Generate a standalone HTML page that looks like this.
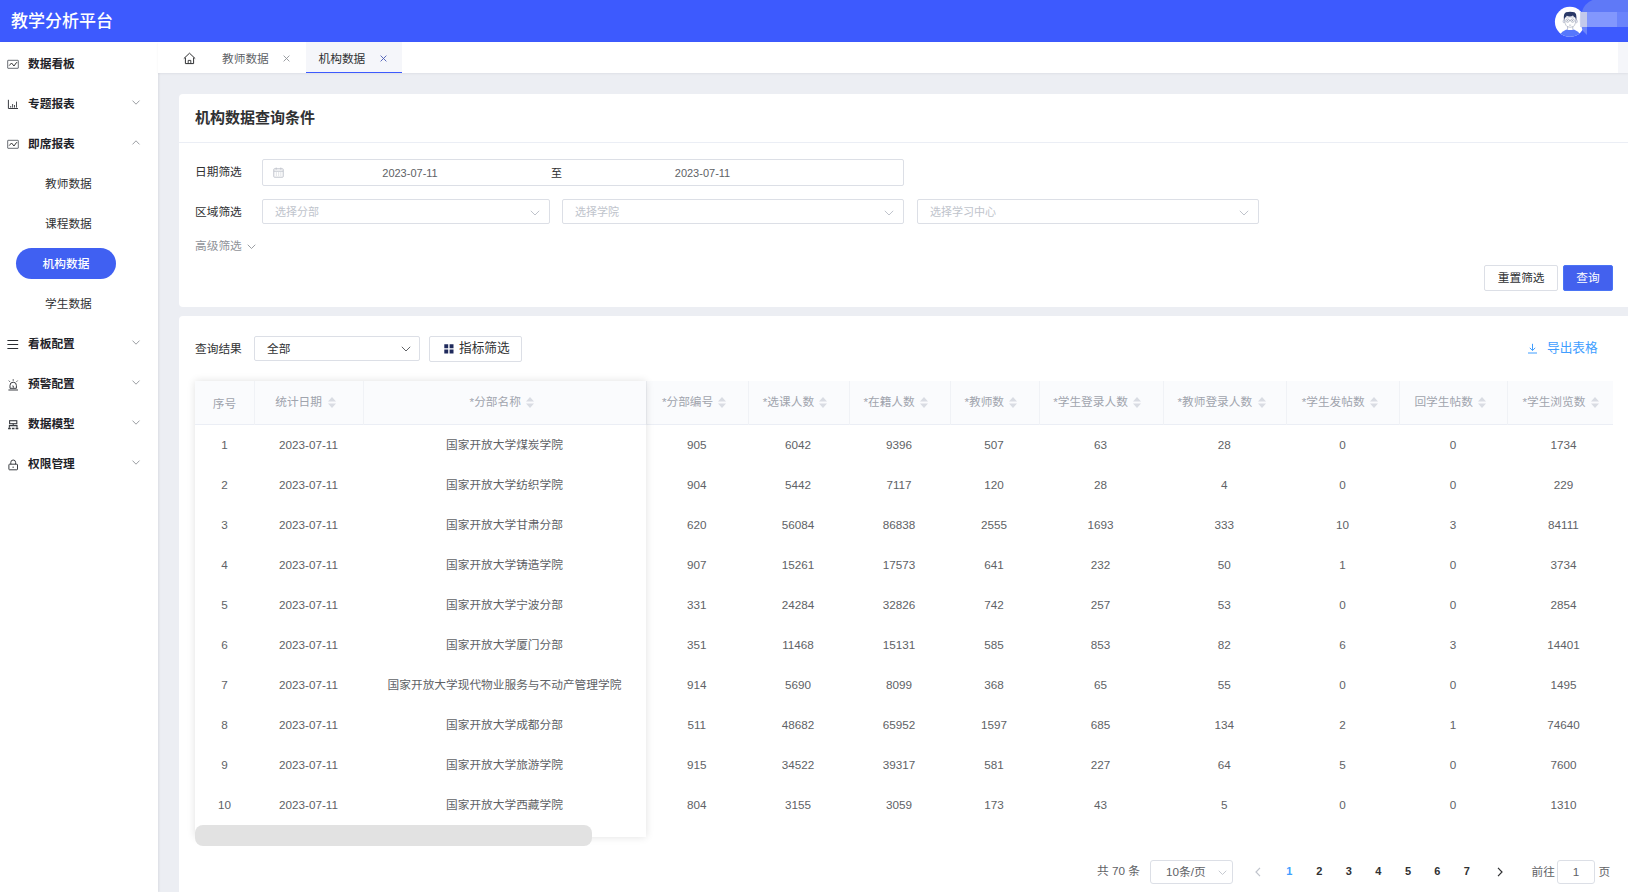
<!DOCTYPE html>
<html lang="zh-CN">
<head>
<meta charset="utf-8">
<title>教学分析平台</title>
<style>
*{box-sizing:border-box;margin:0;padding:0}
html,body{width:1628px;height:892px;overflow:hidden}
body{position:relative;background:#eceef3;font-family:"Liberation Sans","Noto Sans CJK SC",sans-serif;font-size:11.7px;color:#606266;line-height:1}
.abs{position:absolute}
svg{display:block;overflow:visible}
#hdr{position:absolute;left:0;top:0;width:1628px;height:42px;background:#3d5afe;overflow:hidden}
#hdr .ttl{position:absolute;left:11px;top:2px;height:42px;line-height:40px;color:#fff;font-size:17px;font-weight:500;white-space:nowrap}
#side{position:absolute;left:0;top:42px;width:158px;height:850px;background:#fff;box-shadow:1px 0 2px rgba(0,21,41,.08)}
.mi{position:absolute;left:0;width:158px;height:40px;line-height:40px;color:#1f2329;font-weight:bold;font-size:11.7px;white-space:nowrap}
.mi .tx{position:absolute;left:28px;top:1px}
.mi .ic{position:absolute;left:7px;top:15px;width:12px;height:12px}
.mi .ar{position:absolute;left:132px;top:17px;width:8px;height:5px}
.sm{position:absolute;left:45px;height:40px;line-height:40px;color:#303133;font-size:11.7px;white-space:nowrap}
.pill{position:absolute;left:16px;top:206px;width:100px;height:31px;border-radius:16px;background:#4060f2;color:#fff;font-size:11.7px;line-height:31px;text-align:center;font-weight:500}
#tabs{position:absolute;left:158px;top:42px;width:1470px;height:31px;background:#fff;box-shadow:0 1px 2px rgba(0,21,41,.06)}
#rstrip{position:absolute;left:1460px;top:0;width:10px;height:31px;background:#f5f6fa}
.tab{position:absolute;top:0;height:31px;line-height:31px;font-size:11.7px;color:#606266;white-space:nowrap}
.panel{position:absolute;left:179px;width:1449px;background:#fff;border-radius:4px 0 0 4px}
.lbl{position:absolute;font-size:11.7px;color:#303133;white-space:nowrap;line-height:14px}
.inp{position:absolute;border:1px solid #dcdfe6;border-radius:2px;background:#fff}
.ph{position:absolute;left:12px;top:0;color:#c0c4cc;font-size:11px;white-space:nowrap}
.dt{font-size:11px;color:#606266;line-height:27px;white-space:nowrap}
.th{font-size:11.7px;color:#a0a4ad;line-height:42px;white-space:nowrap}
.td{font-size:11.7px;color:#606266;line-height:40px;text-align:center;white-space:nowrap;height:40px}
.pgt{font-size:11.7px;color:#606266;line-height:14px;white-space:nowrap}
.pgn{font-size:11px;font-weight:bold;line-height:14px;width:20px;text-align:center}
.btn{position:absolute;border:1px solid #dcdfe6;border-radius:2px;background:#fff;color:#303133;font-size:11.7px;text-align:center;white-space:nowrap}
</style>
</head>
<body>
<div id="hdr">
<div class="ttl">教学分析平台</div>
<svg class="abs" style="left:1550px;top:0" width="78" height="42" viewBox="1550 0 78 42">
<defs><clipPath id="avc"><circle cx="1569.9" cy="21.8" r="15"/></clipPath></defs>
<circle cx="1569.9" cy="21.8" r="15" fill="#fff"/>
<g clip-path="url(#avc)">
<ellipse cx="1570.2" cy="38.5" rx="11" ry="9.4" fill="#5677fc"/>
<rect x="1567.6" y="26" width="5.2" height="4" fill="#fff"/>
<path d="M1567.6 26 V29.6 M1572.8 26 V29.6" stroke="#7d869c" stroke-width="0.5" fill="none"/>
<path d="M1564.6 17 Q1564.2 24.5 1567.2 26.6 Q1570.2 28 1573.2 26.6 Q1576.2 24.5 1575.8 17 Z" fill="#fff" stroke="#8a92a8" stroke-width="0.5"/>
<ellipse cx="1563.9" cy="21.4" rx="0.9" ry="1.4" fill="#e6e9f2" stroke="#8a92a8" stroke-width="0.4"/>
<ellipse cx="1576.5" cy="21.4" rx="0.9" ry="1.4" fill="#e6e9f2" stroke="#8a92a8" stroke-width="0.4"/>
<path d="M1563.9 20.2 Q1563.2 13.2 1566 12.2 Q1570 11.2 1574.4 12.2 Q1577 13.4 1576.3 20.2 L1575.3 17.6 Q1573.6 17 1573 15.6 Q1570 17.4 1566.8 15.8 Q1566 17.2 1564.9 17.8 Z" fill="#2b3a67"/>
<circle cx="1567.6" cy="20.6" r="1.7" fill="none" stroke="#7d869c" stroke-width="0.5"/>
<circle cx="1572.6" cy="20.6" r="1.7" fill="none" stroke="#7d869c" stroke-width="0.5"/>
<path d="M1569.3 20.4 H1570.9" stroke="#7d869c" stroke-width="0.5"/>
<circle cx="1567.7" cy="20.7" r="0.45" fill="#2b3a67"/><circle cx="1572.5" cy="20.7" r="0.45" fill="#2b3a67"/>
<path d="M1569 25 Q1570.1 25.5 1571.2 25" stroke="#8a92a8" stroke-width="0.5" fill="none"/>
</g>
<path d="M1581.8 12.2 Q1584 3.5 1592.5 0 H1628 V12.2 Z" fill="#5f79f7"/>
<rect x="1580.2" y="12" width="6.8" height="15" fill="#c3c9eb"/>
<path d="M1580.2 12 Q1579.4 19.5 1580.2 27 Z" fill="#c3c9eb"/>
<rect x="1587" y="12" width="30" height="15" fill="#8297fd"/>
<rect x="1617" y="12" width="11" height="15" fill="#6a83fb"/>
<path d="M1587 27 H1581.6 Q1582 29.5 1583 31 L1587 35 Z" fill="#6a83fb"/>
</svg>
</div>
<div id="side">
<div class="mi" style="top:1px"><svg class="ic" viewBox="0 0 12 12"><rect x="0.7" y="2.3" width="10.6" height="8" rx="0.3" fill="none" stroke="#6b6e75" stroke-width="1"/><path d="M2.2 7.6 L4.5 5 L7 8 L9.4 4.6 L10.2 4.6" fill="none" stroke="#222" stroke-width="0.9"/></svg><span class="tx">数据看板</span></div>
<div class="mi" style="top:41px"><svg class="ic" viewBox="0 0 12 12"><path d="M1.4 1.8 V10.5 H11" fill="none" stroke="#3a3d42" stroke-width="1"/><path d="M3.7 9.6 V8 M5.6 9.6 V6 M7.5 9.6 V7 M9.5 9.6 V3.6" fill="none" stroke="#3a3d42" stroke-width="0.9"/></svg><span class="tx">专题报表</span><svg class="ar" viewBox="0 0 8 5"><path d="M0.5 0.6 L4 4.2 L7.5 0.6" fill="none" stroke="#909399" stroke-width="0.9"/></svg></div>
<div class="mi" style="top:81px"><svg class="ic" viewBox="0 0 12 12"><rect x="0.7" y="2.3" width="10.6" height="8" rx="0.3" fill="none" stroke="#6b6e75" stroke-width="1"/><path d="M2.2 7.6 L4.5 5 L7 8 L9.4 4.6 L10.2 4.6" fill="none" stroke="#222" stroke-width="0.9"/></svg><span class="tx">即席报表</span><svg class="ar" viewBox="0 0 8 5"><path d="M0.5 4.4 L4 0.8 L7.5 4.4" fill="none" stroke="#909399" stroke-width="0.9"/></svg></div>
<div class="sm" style="top:122px">教师数据</div>
<div class="sm" style="top:162px">课程数据</div>
<div class="pill">机构数据</div>
<div class="sm" style="top:242px">学生数据</div>
<div class="mi" style="top:281px"><svg class="ic" viewBox="0 0 12 12"><path d="M0.4 2.5 H11.2 M0.4 6.5 H11.2 M0.4 10.5 H11.2" fill="none" stroke="#2a2c30" stroke-width="1"/></svg><span class="tx">看板配置</span><svg class="ar" viewBox="0 0 8 5"><path d="M0.5 0.6 L4 4.2 L7.5 0.6" fill="none" stroke="#909399" stroke-width="0.9"/></svg></div>
<div class="mi" style="top:321px"><svg class="ic" viewBox="0 0 12 12"><g transform="translate(0.2,0.8)"><path d="M2.8 9.5 V6.6 A3.2 3.2 0 0 1 9.2 6.6 V9.5 Z" fill="none" stroke="#3a3d42" stroke-width="1"/><path d="M1.2 11.2 H10.8" stroke="#3a3d42" stroke-width="1"/><path d="M6 0.4 V2 M1.6 1.8 L2.7 3 M10.4 1.8 L9.3 3" stroke="#3a3d42" stroke-width="0.9"/><path d="M5 7.2 H6.2 V9" fill="none" stroke="#3a3d42" stroke-width="0.8"/></g></svg><span class="tx">预警配置</span><svg class="ar" viewBox="0 0 8 5"><path d="M0.5 0.6 L4 4.2 L7.5 0.6" fill="none" stroke="#909399" stroke-width="0.9"/></svg></div>
<div class="mi" style="top:361px"><svg class="ic" viewBox="0 0 12 12"><rect x="2.6" y="2.7" width="7.2" height="3" fill="none" stroke="#3a3d42" stroke-width="1.1"/><path d="M6.2 5.7 V7.6 M2.4 9.8 V7.6 H10 V9.8" fill="none" stroke="#3a3d42" stroke-width="1.1"/><path d="M1.1 10.6 H3.8 M4.9 10.6 H7.5 M8.6 10.6 H11.3" stroke="#3a3d42" stroke-width="1.5"/></svg><span class="tx">数据模型</span><svg class="ar" viewBox="0 0 8 5"><path d="M0.5 0.6 L4 4.2 L7.5 0.6" fill="none" stroke="#909399" stroke-width="0.9"/></svg></div>
<div class="mi" style="top:401px"><svg class="ic" viewBox="0 0 12 12"><rect x="1.9" y="6.2" width="8.6" height="5.6" rx="0.6" fill="none" stroke="#3a3d42" stroke-width="1"/><path d="M3.8 6.2 V4.4 A2.4 2.4 0 0 1 8.6 4.4 V6.2" fill="none" stroke="#3a3d42" stroke-width="1"/><path d="M5.4 9.2 H7" stroke="#3a3d42" stroke-width="0.9"/></svg><span class="tx">权限管理</span><svg class="ar" viewBox="0 0 8 5"><path d="M0.5 0.6 L4 4.2 L7.5 0.6" fill="none" stroke="#909399" stroke-width="0.9"/></svg></div>
</div>
<div id="tabs">
<svg class="abs" style="left:25px;top:10px" width="13" height="13" viewBox="0 0 13 13"><path d="M0.8 6.6 L6.5 1.2 L12.2 6.6" fill="none" stroke="#303133" stroke-width="1" stroke-linejoin="round"/><path d="M2.4 5.6 V11.6 H10.6 V5.6" fill="none" stroke="#303133" stroke-width="1"/><path d="M5.2 11.6 V8.4 H7.8 V11.6" fill="none" stroke="#303133" stroke-width="0.9"/></svg><div class="tab" style="left:64px;top:1px">教师数据</div><svg class="abs" style="left:125px;top:12.5px" width="7" height="7" viewBox="0 0 7 7"><path d="M0.6 0.6 L6.4 6.4 M6.4 0.6 L0.6 6.4" stroke="#909399" stroke-width="0.9"/></svg><div class="abs" style="left:148px;top:0;width:96px;height:31px;background:#f5f6fa;border-bottom:1.6px solid #3d5afe"></div><div class="tab" style="left:160.5px;top:1px;color:#303133">机构数据</div><svg class="abs" style="left:222px;top:12.5px" width="7" height="7" viewBox="0 0 7 7"><path d="M0.6 0.6 L6.4 6.4 M6.4 0.6 L0.6 6.4" stroke="#4b5bb5" stroke-width="0.9"/></svg>
<div id="rstrip"></div>
</div>
<div class="panel" id="p1" style="top:93.5px;height:213.5px">
<div class="abs" style="left:16px;top:14.5px;font-size:15px;font-weight:bold;color:#303133;line-height:20px;white-space:nowrap">机构数据查询条件</div><div class="abs" style="left:0;top:48.0px;width:1449px;height:1px;background:#ebeef5"></div><div class="lbl" style="left:16px;top:71.5px">日期筛选</div><div class="inp" style="left:83px;top:65.5px;width:642px;height:27px"><svg class="abs" style="left:10px;top:7px" width="11" height="11" viewBox="0 0 11 11"><rect x="0.8" y="1.8" width="9.4" height="8.4" rx="0.6" fill="none" stroke="#c0c4cc" stroke-width="1"/><path d="M0.8 4.2 H10.2 M3.2 0.6 V2.6 M7.8 0.6 V2.6" stroke="#c0c4cc" stroke-width="1"/><path d="M2.8 6 H4 M5 6 H6.2 M7.2 6 H8.4 M2.8 8 H4 M5 8 H6.2 M7.2 8 H8.4" stroke="#c0c4cc" stroke-width="0.8"/></svg><div class="abs dt" style="left:117px;top:0;width:60px;text-align:center">2023-07-11</div><div class="abs" style="left:288px;top:0;line-height:26px;font-size:11px;color:#303133">至</div><div class="abs dt" style="left:409.5px;top:0;width:60px;text-align:center">2023-07-11</div></div><div class="lbl" style="left:16px;top:111.5px">区域筛选</div><div class="inp" style="left:83px;top:105.5px;width:288px;height:25px"><div class="ph" style="line-height:25px">选择分部</div><svg class="abs" style="left:267px;top:9.5px" width="10" height="6" viewBox="0 0 10 6"><path d="M0.8 0.8 L5 5 L9.2 0.8" fill="none" stroke="#c0c4cc" stroke-width="1"/></svg></div><div class="inp" style="left:383px;top:105.5px;width:342px;height:25px"><div class="ph" style="line-height:25px">选择学院</div><svg class="abs" style="left:321px;top:9.5px" width="10" height="6" viewBox="0 0 10 6"><path d="M0.8 0.8 L5 5 L9.2 0.8" fill="none" stroke="#c0c4cc" stroke-width="1"/></svg></div><div class="inp" style="left:738px;top:105.5px;width:342px;height:25px"><div class="ph" style="line-height:25px">选择学习中心</div><svg class="abs" style="left:321px;top:9.5px" width="10" height="6" viewBox="0 0 10 6"><path d="M0.8 0.8 L5 5 L9.2 0.8" fill="none" stroke="#c0c4cc" stroke-width="1"/></svg></div><div class="lbl" style="left:16px;top:145.5px;color:#909399">高级筛选</div><svg class="abs" style="left:68px;top:150.0px" width="9" height="5.4" viewBox="0 0 10 6"><path d="M0.8 0.8 L5 5 L9.2 0.8" fill="none" stroke="#909399" stroke-width="1"/></svg><div class="btn" style="left:1305.4px;top:171.5px;width:73.5px;height:25.6px;line-height:24px">重置筛选</div><div class="btn" style="left:1384px;top:171.5px;width:50px;height:25.6px;line-height:24px;background:#4361ee;border-color:#4a74f5;color:#fff">查询</div>
</div>
<div class="panel" id="p2" style="top:316px;height:576px;border-radius:4px 0 0 0">
<div class="lbl" style="left:16px;top:26px">查询结果</div><div class="inp" style="left:75px;top:20px;width:166px;height:25px"><div class="abs" style="left:12px;top:0;line-height:23px;color:#303133;font-size:11.7px">全部</div><svg class="abs" style="left:146px;top:9px" width="10" height="6" viewBox="0 0 10 6"><path d="M0.8 0.8 L5 5 L9.2 0.8" fill="none" stroke="#606266" stroke-width="1"/></svg></div><div class="btn" style="left:250px;top:19.5px;width:93px;height:26px"><svg class="abs" style="left:14px;top:7px" width="10" height="10" viewBox="0 0 10 10"><path d="M0.3 0.3h3.9v3.9h-3.9z M5.6 0.3h3.9v3.9h-3.9z M0.3 5.6h3.9v3.9h-3.9z M5.6 5.6h3.9v3.9h-3.9z" fill="#1f2a5c"/></svg><div class="abs" style="left:29px;top:0;line-height:23px;font-size:12.7px;color:#303133">指标筛选</div></div><div class="abs" style="left:1348px;top:25px;width:80px;height:14px;color:#409eff;font-size:12.7px;line-height:14px;white-space:nowrap"><svg class="abs" style="left:0;top:2px" width="11" height="11" viewBox="0 0 11 11"><path d="M5.5 0.8 V7.4 M2.8 4.8 L5.5 7.6 L8.2 4.8 M1 10 H10" fill="none" stroke="#409eff" stroke-width="1"/></svg><span class="abs" style="left:20px;top:0">导出表格</span></div><div id="tbl" class="abs" style="left:16px;top:65px;width:1418px;height:455.5px;overflow:hidden"><div class="abs" style="left:0;top:0;width:1418px;height:43.5px;background:#fafbfd;border-bottom:1px solid #ebeef5"></div><div class="abs th" style="left:0px;top:2px;width:59px;text-align:center">序号</div><div class="abs" style="left:59px;top:0;width:1px;height:43.5px;background:#f0f2f6"></div><div class="abs th" style="left:80.2px;top:0">统计日期</div><svg class="abs" style="left:133px;top:16px" width="8" height="11" viewBox="0 0 8 11"><path d="M4 0 L8 4.4 H0 Z M4 11 L0 6.6 H8 Z" fill="#d9dce3"/></svg><div class="abs" style="left:168px;top:0;width:1px;height:43.5px;background:#f0f2f6"></div><div class="abs th" style="left:274.6px;top:0">*分部名称</div><svg class="abs" style="left:331.1px;top:16px" width="8" height="11" viewBox="0 0 8 11"><path d="M4 0 L8 4.4 H0 Z M4 11 L0 6.6 H8 Z" fill="#d9dce3"/></svg><div class="abs" style="left:451px;top:0;width:1px;height:43.5px;background:#f0f2f6"></div><div class="abs th" style="left:466.9px;top:0">*分部编号</div><svg class="abs" style="left:523.1px;top:16px" width="8" height="11" viewBox="0 0 8 11"><path d="M4 0 L8 4.4 H0 Z M4 11 L0 6.6 H8 Z" fill="#d9dce3"/></svg><div class="abs" style="left:552.5px;top:0;width:1px;height:43.5px;background:#f0f2f6"></div><div class="abs th" style="left:567.8px;top:0">*选课人数</div><svg class="abs" style="left:624px;top:16px" width="8" height="11" viewBox="0 0 8 11"><path d="M4 0 L8 4.4 H0 Z M4 11 L0 6.6 H8 Z" fill="#d9dce3"/></svg><div class="abs" style="left:653.5px;top:0;width:1px;height:43.5px;background:#f0f2f6"></div><div class="abs th" style="left:668.4px;top:0">*在籍人数</div><svg class="abs" style="left:725px;top:16px" width="8" height="11" viewBox="0 0 8 11"><path d="M4 0 L8 4.4 H0 Z M4 11 L0 6.6 H8 Z" fill="#d9dce3"/></svg><div class="abs" style="left:754.5px;top:0;width:1px;height:43.5px;background:#f0f2f6"></div><div class="abs th" style="left:769.4px;top:0">*教师数</div><svg class="abs" style="left:813.8px;top:16px" width="8" height="11" viewBox="0 0 8 11"><path d="M4 0 L8 4.4 H0 Z M4 11 L0 6.6 H8 Z" fill="#d9dce3"/></svg><div class="abs" style="left:843.5px;top:0;width:1px;height:43.5px;background:#f0f2f6"></div><div class="abs th" style="left:858.2px;top:0">*学生登录人数</div><svg class="abs" style="left:938.3px;top:16px" width="8" height="11" viewBox="0 0 8 11"><path d="M4 0 L8 4.4 H0 Z M4 11 L0 6.6 H8 Z" fill="#d9dce3"/></svg><div class="abs" style="left:967.5px;top:0;width:1px;height:43.5px;background:#f0f2f6"></div><div class="abs th" style="left:982.5px;top:0">*教师登录人数</div><svg class="abs" style="left:1063px;top:16px" width="8" height="11" viewBox="0 0 8 11"><path d="M4 0 L8 4.4 H0 Z M4 11 L0 6.6 H8 Z" fill="#d9dce3"/></svg><div class="abs" style="left:1091px;top:0;width:1px;height:43.5px;background:#f0f2f6"></div><div class="abs th" style="left:1106.7px;top:0">*学生发帖数</div><svg class="abs" style="left:1175px;top:16px" width="8" height="11" viewBox="0 0 8 11"><path d="M4 0 L8 4.4 H0 Z M4 11 L0 6.6 H8 Z" fill="#d9dce3"/></svg><div class="abs" style="left:1204px;top:0;width:1px;height:43.5px;background:#f0f2f6"></div><div class="abs th" style="left:1219.4px;top:0">回学生帖数</div><svg class="abs" style="left:1283px;top:16px" width="8" height="11" viewBox="0 0 8 11"><path d="M4 0 L8 4.4 H0 Z M4 11 L0 6.6 H8 Z" fill="#d9dce3"/></svg><div class="abs" style="left:1312px;top:0;width:1px;height:43.5px;background:#f0f2f6"></div><div class="abs th" style="left:1327.4px;top:0">*学生浏览数</div><svg class="abs" style="left:1395.8px;top:16px" width="8" height="11" viewBox="0 0 8 11"><path d="M4 0 L8 4.4 H0 Z M4 11 L0 6.6 H8 Z" fill="#d9dce3"/></svg>
<div class="abs td" style="left:0px;top:43.5px;width:59px">1</div><div class="abs td" style="left:59px;top:43.5px;width:109px">2023-07-11</div><div class="abs td" style="left:168px;top:43.5px;width:283px">国家开放大学煤炭学院</div><div class="abs td" style="left:451px;top:43.5px;width:101.5px">905</div><div class="abs td" style="left:552.5px;top:43.5px;width:101.0px">6042</div><div class="abs td" style="left:653.5px;top:43.5px;width:101.0px">9396</div><div class="abs td" style="left:754.5px;top:43.5px;width:89.0px">507</div><div class="abs td" style="left:843.5px;top:43.5px;width:124.0px">63</div><div class="abs td" style="left:967.5px;top:43.5px;width:123.5px">28</div><div class="abs td" style="left:1091px;top:43.5px;width:113px">0</div><div class="abs td" style="left:1204px;top:43.5px;width:108px">0</div><div class="abs td" style="left:1312px;top:43.5px;width:113px">1734</div>
<div class="abs td" style="left:0px;top:83.5px;width:59px">2</div><div class="abs td" style="left:59px;top:83.5px;width:109px">2023-07-11</div><div class="abs td" style="left:168px;top:83.5px;width:283px">国家开放大学纺织学院</div><div class="abs td" style="left:451px;top:83.5px;width:101.5px">904</div><div class="abs td" style="left:552.5px;top:83.5px;width:101.0px">5442</div><div class="abs td" style="left:653.5px;top:83.5px;width:101.0px">7117</div><div class="abs td" style="left:754.5px;top:83.5px;width:89.0px">120</div><div class="abs td" style="left:843.5px;top:83.5px;width:124.0px">28</div><div class="abs td" style="left:967.5px;top:83.5px;width:123.5px">4</div><div class="abs td" style="left:1091px;top:83.5px;width:113px">0</div><div class="abs td" style="left:1204px;top:83.5px;width:108px">0</div><div class="abs td" style="left:1312px;top:83.5px;width:113px">229</div>
<div class="abs td" style="left:0px;top:123.5px;width:59px">3</div><div class="abs td" style="left:59px;top:123.5px;width:109px">2023-07-11</div><div class="abs td" style="left:168px;top:123.5px;width:283px">国家开放大学甘肃分部</div><div class="abs td" style="left:451px;top:123.5px;width:101.5px">620</div><div class="abs td" style="left:552.5px;top:123.5px;width:101.0px">56084</div><div class="abs td" style="left:653.5px;top:123.5px;width:101.0px">86838</div><div class="abs td" style="left:754.5px;top:123.5px;width:89.0px">2555</div><div class="abs td" style="left:843.5px;top:123.5px;width:124.0px">1693</div><div class="abs td" style="left:967.5px;top:123.5px;width:123.5px">333</div><div class="abs td" style="left:1091px;top:123.5px;width:113px">10</div><div class="abs td" style="left:1204px;top:123.5px;width:108px">3</div><div class="abs td" style="left:1312px;top:123.5px;width:113px">84111</div>
<div class="abs td" style="left:0px;top:163.5px;width:59px">4</div><div class="abs td" style="left:59px;top:163.5px;width:109px">2023-07-11</div><div class="abs td" style="left:168px;top:163.5px;width:283px">国家开放大学铸造学院</div><div class="abs td" style="left:451px;top:163.5px;width:101.5px">907</div><div class="abs td" style="left:552.5px;top:163.5px;width:101.0px">15261</div><div class="abs td" style="left:653.5px;top:163.5px;width:101.0px">17573</div><div class="abs td" style="left:754.5px;top:163.5px;width:89.0px">641</div><div class="abs td" style="left:843.5px;top:163.5px;width:124.0px">232</div><div class="abs td" style="left:967.5px;top:163.5px;width:123.5px">50</div><div class="abs td" style="left:1091px;top:163.5px;width:113px">1</div><div class="abs td" style="left:1204px;top:163.5px;width:108px">0</div><div class="abs td" style="left:1312px;top:163.5px;width:113px">3734</div>
<div class="abs td" style="left:0px;top:203.5px;width:59px">5</div><div class="abs td" style="left:59px;top:203.5px;width:109px">2023-07-11</div><div class="abs td" style="left:168px;top:203.5px;width:283px">国家开放大学宁波分部</div><div class="abs td" style="left:451px;top:203.5px;width:101.5px">331</div><div class="abs td" style="left:552.5px;top:203.5px;width:101.0px">24284</div><div class="abs td" style="left:653.5px;top:203.5px;width:101.0px">32826</div><div class="abs td" style="left:754.5px;top:203.5px;width:89.0px">742</div><div class="abs td" style="left:843.5px;top:203.5px;width:124.0px">257</div><div class="abs td" style="left:967.5px;top:203.5px;width:123.5px">53</div><div class="abs td" style="left:1091px;top:203.5px;width:113px">0</div><div class="abs td" style="left:1204px;top:203.5px;width:108px">0</div><div class="abs td" style="left:1312px;top:203.5px;width:113px">2854</div>
<div class="abs td" style="left:0px;top:243.5px;width:59px">6</div><div class="abs td" style="left:59px;top:243.5px;width:109px">2023-07-11</div><div class="abs td" style="left:168px;top:243.5px;width:283px">国家开放大学厦门分部</div><div class="abs td" style="left:451px;top:243.5px;width:101.5px">351</div><div class="abs td" style="left:552.5px;top:243.5px;width:101.0px">11468</div><div class="abs td" style="left:653.5px;top:243.5px;width:101.0px">15131</div><div class="abs td" style="left:754.5px;top:243.5px;width:89.0px">585</div><div class="abs td" style="left:843.5px;top:243.5px;width:124.0px">853</div><div class="abs td" style="left:967.5px;top:243.5px;width:123.5px">82</div><div class="abs td" style="left:1091px;top:243.5px;width:113px">6</div><div class="abs td" style="left:1204px;top:243.5px;width:108px">3</div><div class="abs td" style="left:1312px;top:243.5px;width:113px">14401</div>
<div class="abs td" style="left:0px;top:283.5px;width:59px">7</div><div class="abs td" style="left:59px;top:283.5px;width:109px">2023-07-11</div><div class="abs td" style="left:168px;top:283.5px;width:283px">国家开放大学现代物业服务与不动产管理学院</div><div class="abs td" style="left:451px;top:283.5px;width:101.5px">914</div><div class="abs td" style="left:552.5px;top:283.5px;width:101.0px">5690</div><div class="abs td" style="left:653.5px;top:283.5px;width:101.0px">8099</div><div class="abs td" style="left:754.5px;top:283.5px;width:89.0px">368</div><div class="abs td" style="left:843.5px;top:283.5px;width:124.0px">65</div><div class="abs td" style="left:967.5px;top:283.5px;width:123.5px">55</div><div class="abs td" style="left:1091px;top:283.5px;width:113px">0</div><div class="abs td" style="left:1204px;top:283.5px;width:108px">0</div><div class="abs td" style="left:1312px;top:283.5px;width:113px">1495</div>
<div class="abs td" style="left:0px;top:323.5px;width:59px">8</div><div class="abs td" style="left:59px;top:323.5px;width:109px">2023-07-11</div><div class="abs td" style="left:168px;top:323.5px;width:283px">国家开放大学成都分部</div><div class="abs td" style="left:451px;top:323.5px;width:101.5px">511</div><div class="abs td" style="left:552.5px;top:323.5px;width:101.0px">48682</div><div class="abs td" style="left:653.5px;top:323.5px;width:101.0px">65952</div><div class="abs td" style="left:754.5px;top:323.5px;width:89.0px">1597</div><div class="abs td" style="left:843.5px;top:323.5px;width:124.0px">685</div><div class="abs td" style="left:967.5px;top:323.5px;width:123.5px">134</div><div class="abs td" style="left:1091px;top:323.5px;width:113px">2</div><div class="abs td" style="left:1204px;top:323.5px;width:108px">1</div><div class="abs td" style="left:1312px;top:323.5px;width:113px">74640</div>
<div class="abs td" style="left:0px;top:363.5px;width:59px">9</div><div class="abs td" style="left:59px;top:363.5px;width:109px">2023-07-11</div><div class="abs td" style="left:168px;top:363.5px;width:283px">国家开放大学旅游学院</div><div class="abs td" style="left:451px;top:363.5px;width:101.5px">915</div><div class="abs td" style="left:552.5px;top:363.5px;width:101.0px">34522</div><div class="abs td" style="left:653.5px;top:363.5px;width:101.0px">39317</div><div class="abs td" style="left:754.5px;top:363.5px;width:89.0px">581</div><div class="abs td" style="left:843.5px;top:363.5px;width:124.0px">227</div><div class="abs td" style="left:967.5px;top:363.5px;width:123.5px">64</div><div class="abs td" style="left:1091px;top:363.5px;width:113px">5</div><div class="abs td" style="left:1204px;top:363.5px;width:108px">0</div><div class="abs td" style="left:1312px;top:363.5px;width:113px">7600</div>
<div class="abs td" style="left:0px;top:403.5px;width:59px">10</div><div class="abs td" style="left:59px;top:403.5px;width:109px">2023-07-11</div><div class="abs td" style="left:168px;top:403.5px;width:283px">国家开放大学西藏学院</div><div class="abs td" style="left:451px;top:403.5px;width:101.5px">804</div><div class="abs td" style="left:552.5px;top:403.5px;width:101.0px">3155</div><div class="abs td" style="left:653.5px;top:403.5px;width:101.0px">3059</div><div class="abs td" style="left:754.5px;top:403.5px;width:89.0px">173</div><div class="abs td" style="left:843.5px;top:403.5px;width:124.0px">43</div><div class="abs td" style="left:967.5px;top:403.5px;width:123.5px">5</div><div class="abs td" style="left:1091px;top:403.5px;width:113px">0</div><div class="abs td" style="left:1204px;top:403.5px;width:108px">0</div><div class="abs td" style="left:1312px;top:403.5px;width:113px">1310</div>
</div>
<div class="abs" style="left:16px;top:65px;width:451px;height:455.5px;box-shadow:0 0 8px rgba(0,0,0,.12);pointer-events:none"></div><div class="abs" style="left:16px;top:509px;width:397px;height:21px;border-radius:8px;background:#e2e2e2"></div><div class="abs pgt" style="left:918px;top:548px">共 70 条</div><div class="inp" style="left:971px;top:544px;width:82.5px;height:24px;border-radius:3px"><div class="abs" style="left:15px;top:0;line-height:22px;color:#606266;font-size:11.7px;white-space:nowrap">10条/页</div><svg class="abs" style="left:67px;top:9px" width="9" height="5.4" viewBox="0 0 10 6"><path d="M0.8 0.8 L5 5 L9.2 0.8" fill="none" stroke="#c0c4cc" stroke-width="1"/></svg></div><svg class="abs" style="left:1075.5px;top:550.5px" width="6" height="10" viewBox="0 0 6 10"><path d="M5 0.8 L1 5 L5 9.2" fill="none" stroke="#c0c4cc" stroke-width="1.2"/></svg><div class="abs pgn" style="left:1100.3px;top:548px;color:#409eff">1</div><div class="abs pgn" style="left:1130.2px;top:548px;color:#303133">2</div><div class="abs pgn" style="left:1159.7px;top:548px;color:#303133">3</div><div class="abs pgn" style="left:1189.2px;top:548px;color:#303133">4</div><div class="abs pgn" style="left:1219px;top:548px;color:#303133">5</div><div class="abs pgn" style="left:1248.3px;top:548px;color:#303133">6</div><div class="abs pgn" style="left:1277.8px;top:548px;color:#303133">7</div><svg class="abs" style="left:1317.5px;top:550.5px" width="6" height="10" viewBox="0 0 6 10"><path d="M1 0.8 L5 5 L1 9.2" fill="none" stroke="#303133" stroke-width="1.2"/></svg><div class="abs pgt" style="left:1352.5px;top:548.5px">前往</div><div class="inp" style="left:1378px;top:544px;width:38px;height:24px;border-radius:3px;text-align:center;line-height:22px;font-size:11.7px;color:#606266">1</div><div class="abs pgt" style="left:1419.5px;top:548.5px">页</div>
</div>
</body>
</html>
